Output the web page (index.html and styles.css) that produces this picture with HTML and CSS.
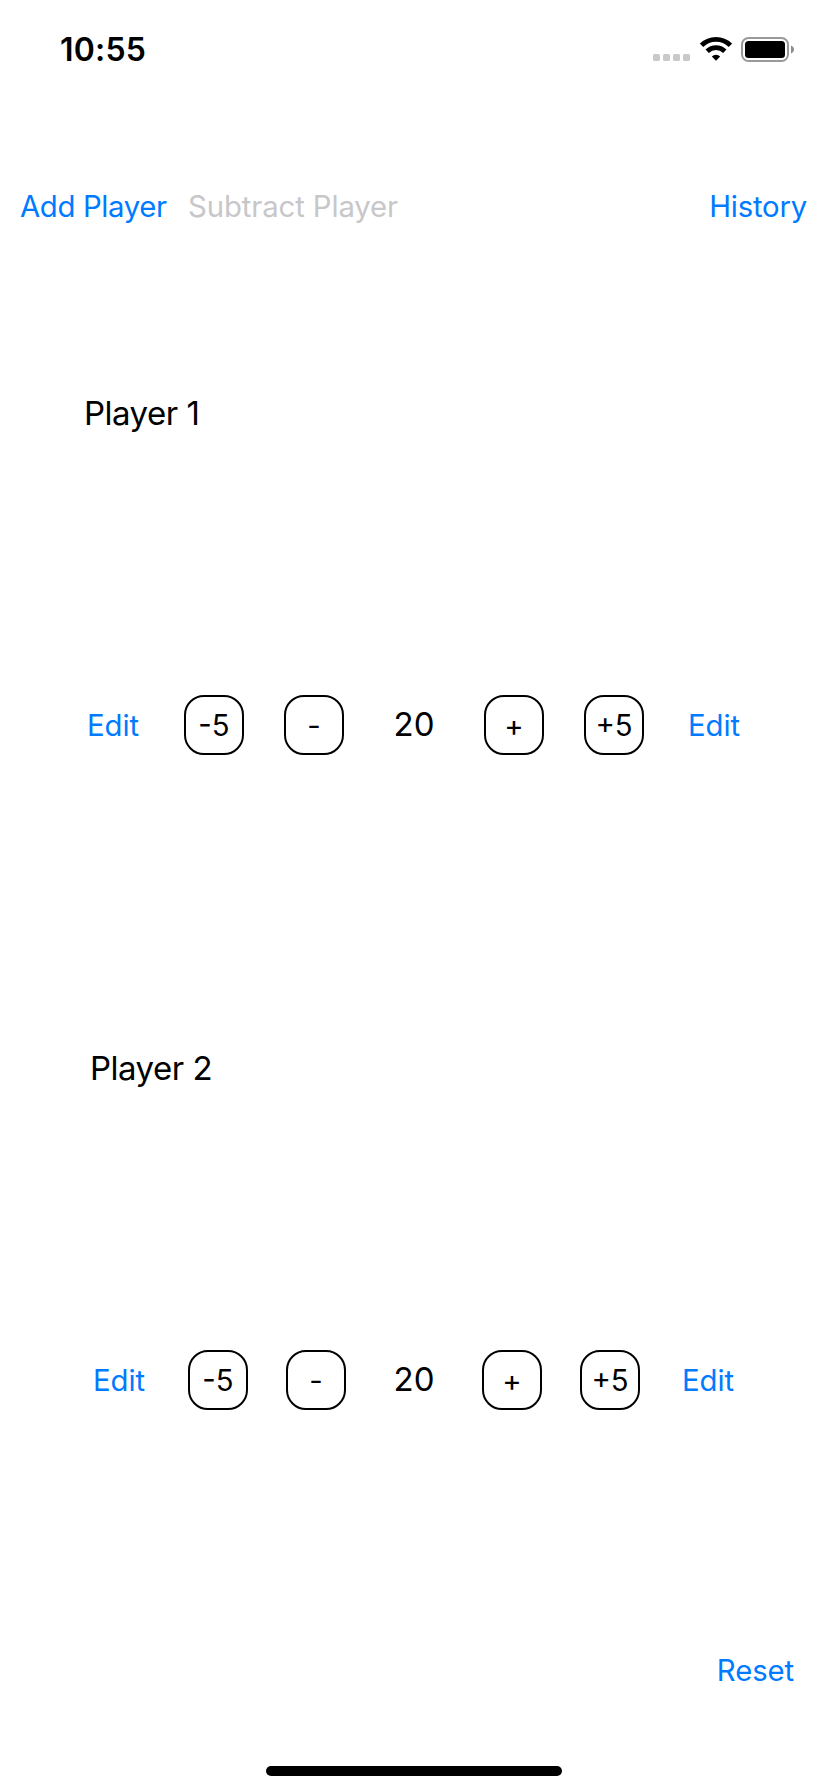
FILE: index.html
```html
<!DOCTYPE html>
<html lang="en">
<head>
<meta charset="utf-8">
<title>Life Counter</title>
<link rel="stylesheet" href="styles.css">
</head>
<body>
<div class="screen">
  <header class="status">
    <span class="clock">10:55</span>
    <div class="indicators">
      <svg class="signal" width="38" height="8" viewBox="0 0 38 8" fill="#c9c9c9">
        <rect width="7" height="7" rx="1.6"/><rect x="10" width="7" height="7" rx="1.6"/><rect x="20" width="7" height="7" rx="1.6"/><rect x="30" width="7" height="7" rx="1.6"/>
      </svg>
      <svg class="wifi" width="32" height="24" viewBox="0 0 32 24">
        <g fill="none" stroke="#000" stroke-width="4.8">
          <path d="M1.6 8.4A20.4 20.4 0 0 1 30.4 8.4"/>
          <path d="M7.2 14.2A12.6 12.6 0 0 1 24.8 14.2"/>
        </g>
        <path d="M16 23.8 11.8 19.400A6.400 6.400 0 0 1 20.200 19.400Z"/>
      </svg>
      <svg class="battery" width="54" height="26" viewBox="0 0 54 26">
        <rect x="1" y="1" width="46" height="23" rx="6.5" fill="none" stroke="#999" stroke-width="2"/>
        <rect x="4" y="4" width="40" height="17" rx="3.5"/>
        <path d="M50 8.5C54 10 54 15 50 16.500Z" fill="#8c8c8c"/>
      </svg>
    </div>
  </header>
  <nav class="toolbar">
    <span class="link add">Add Player</span>
    <span class="link subtract">Subtract Player</span>
    <span class="link history">History</span>
  </nav>
  <main class="players">
    <section class="player first">
      <h2 class="name">Player 1</h2>
      <div class="controls">
        <span class="link edit">Edit</span>
        <span class="step">-5</span>
        <span class="step">-</span>
        <span class="score">20</span>
        <span class="step">+</span>
        <span class="step">+5</span>
        <span class="link edit">Edit</span>
      </div>
    </section>
    <section class="player second">
      <h2 class="name">Player 2</h2>
      <div class="controls">
        <span class="link edit">Edit</span>
        <span class="step">-5</span>
        <span class="step">-</span>
        <span class="score">20</span>
        <span class="step">+</span>
        <span class="step">+5</span>
        <span class="link edit">Edit</span>
      </div>
    </section>
  </main>
  <footer class="footer">
    <span class="link reset">Reset</span>
    <div class="home"></div>
  </footer>
</div>
</body>
</html>
```
FILE: styles.css
```css
body {
  margin: 0;
  background: #fff;
  color: #000;
  font-family: Inter, "Liberation Sans", sans-serif;
}
.screen {
  display: flex;
  flex-direction: column;
  width: 828px;
  height: 1792px;
}
.status {
  display: flex;
  justify-content: space-between;
  height: 100px;
  padding: 0 33px 0 60px;
  box-sizing: border-box;
}
.clock {
  font-size: 32px;
  font-weight: 600;
  letter-spacing: 0.2px;
  line-height: 100px;
}
.indicators {
  display: flex;
  align-items: flex-start;
  width: 142px;
  padding-top: 37px;
}
.signal { margin: 17px 9px 0 0; }
.wifi { margin-right: 9px; }
.battery { flex: none; }
.link {
  color: #007aff;
  font-size: 29.3px;
  white-space: nowrap;
}
.toolbar {
  display: flex;
  height: 60px;
  margin-top: 77px;
  padding: 0 21px 0 20px;
  line-height: 60px;
}
.add {
  width: 168px;
  letter-spacing: -0.35px;
}
.subtract {
  color: #c7c7c9;
  letter-spacing: -0.1px;
}
.history {
  margin-left: auto;
  letter-spacing: -0.2px;
}
.player { height: 655px; }
.first { --gap: 40px; --inset: 84px; }
.second { --gap: 38px; --inset: 90px; }
.name {
  margin: 0;
  padding: 146px 0 0 var(--inset);
  font-size: 33px;
  font-weight: 400;
  letter-spacing: -0.5px;
  line-height: 60px;
}
.controls {
  display: flex;
  justify-content: center;
  gap: var(--gap);
  margin-top: 252px;
}
.edit, .step, .score {
  width: 60px;
  height: 60px;
  line-height: 61px;
  text-align: center;
}
.edit:first-child {
  box-sizing: border-box;
  padding-right: 2px;
}
.step {
  box-sizing: border-box;
  border: 2px solid #000;
  border-radius: 20px;
  font-size: 29.3px;
  line-height: 57px;
}
.score {
  font-size: 33px;
  line-height: 58px;
}
.footer {
  display: flex;
  flex: 1;
  flex-direction: column;
  align-items: flex-end;
}
.reset {
  margin: 94px 34px 0 0;
  letter-spacing: -0.1px;
  line-height: 60px;
}
.home {
  width: 296px;
  height: 10px;
  margin: auto auto 16px;
  border-radius: 5px;
  background: #000;
}
```
